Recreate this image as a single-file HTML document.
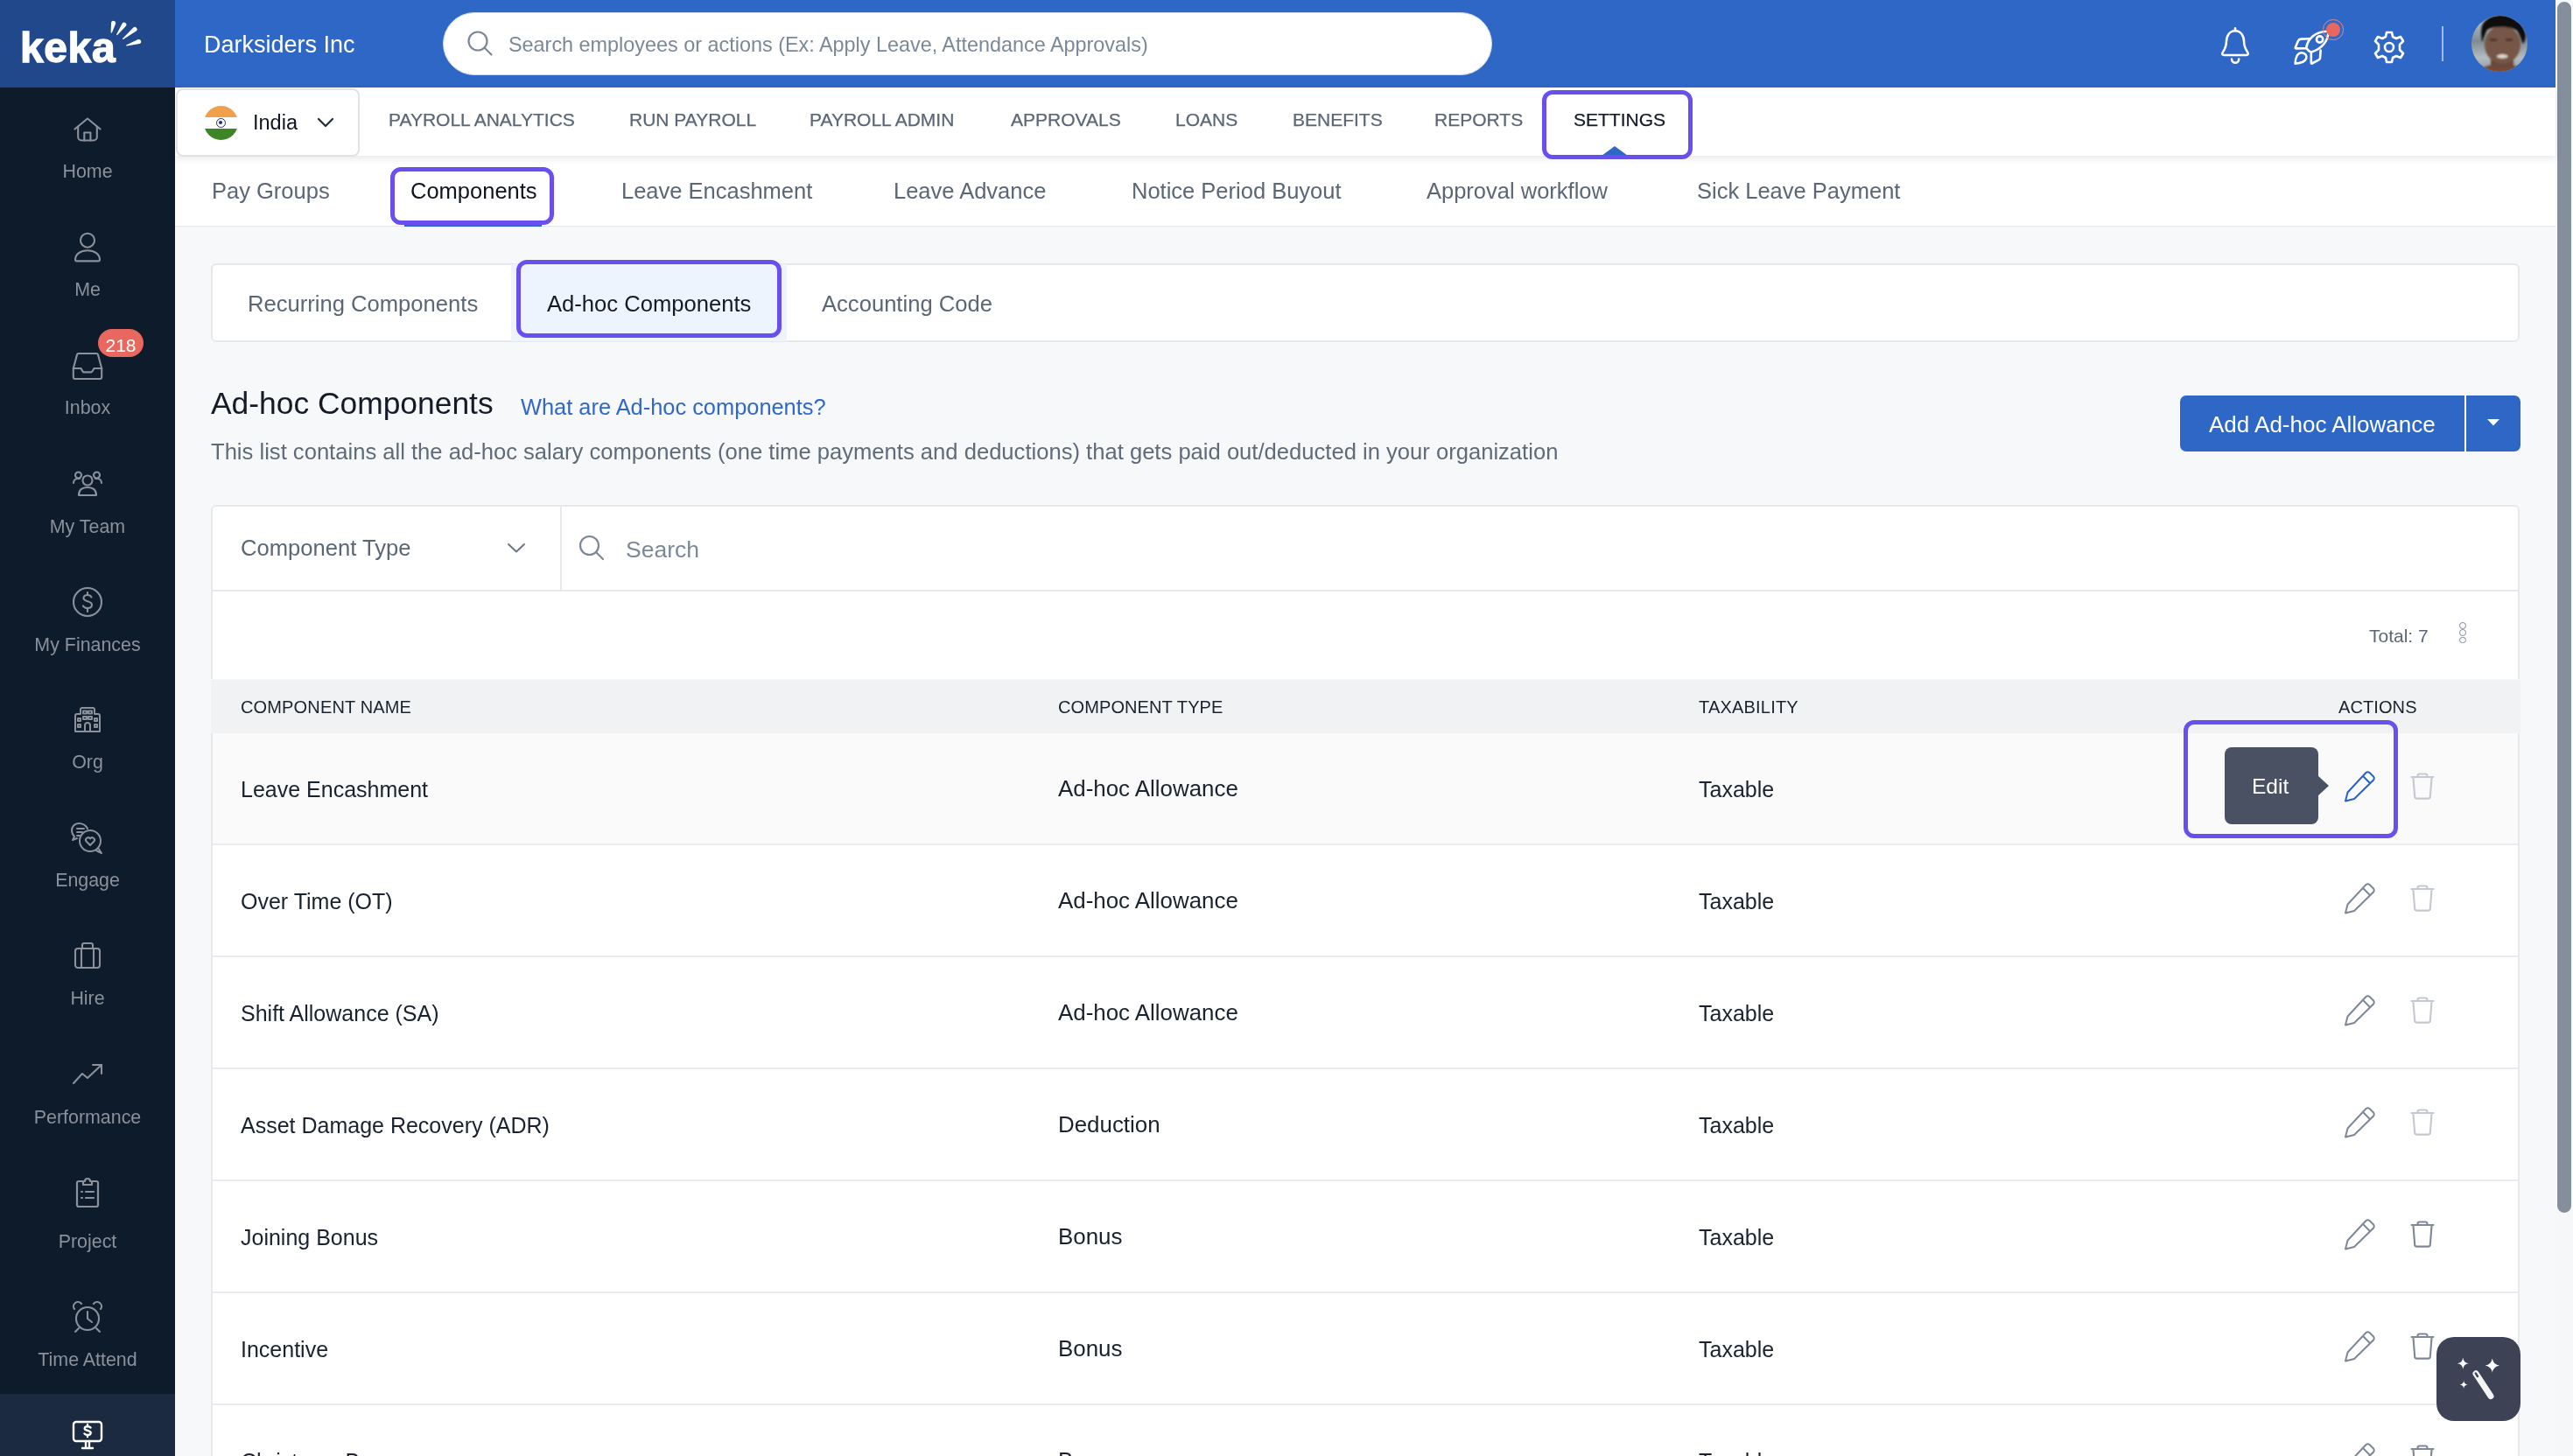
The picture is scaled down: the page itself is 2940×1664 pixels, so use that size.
<!DOCTYPE html><html><head><meta charset="utf-8"><style>
html,body{margin:0;padding:0;width:2940px;height:1664px;overflow:hidden;background:#f7f8fa;font-family:"Liberation Sans", sans-serif;}
.t{position:absolute;white-space:nowrap;line-height:1;will-change:transform;}
.b{position:absolute;box-sizing:border-box;}
</style></head><body>
<div class="b" style="left:0.0px;top:0.0px;width:200.0px;height:1664.0px;background:#0e1b2a"></div>
<div class="b" style="left:0.0px;top:0.0px;width:200.0px;height:100.0px;background:#21488a"></div>
<div class="b" style="left:200.0px;top:0.0px;width:2720.0px;height:100.0px;background:#2f67c7"></div>
<div class="b" style="left:200.0px;top:100.0px;width:2720.0px;height:78.0px;background:#fff;box-shadow:0 3px 8px rgba(20,30,50,0.10);z-index:2"></div>
<div class="b" style="left:200.0px;top:178.0px;width:2720.0px;height:81.5px;background:#fff;border-bottom:2px solid #e6e8ec"></div>
<div class="b" style="left:200.0px;top:259.0px;width:2720.0px;height:1405.0px;background:#f7f8fa"></div>
<div class="t" style="left:23px;top:31.2px;font-size:48px;color:#fff;font-weight:bold;letter-spacing:0.6px;-webkit-text-stroke:1.3px #fff;">keka</div>
<svg class="b" style="left:100px;top:0px" width="70" height="60" viewBox="0 0 70 60"><path d="M27.98 37.15 L32.14 26.95 A2.6 2.6 0 0 0 27.06 25.85 L26.62 36.85 A0.7 0.7 0 0 0 27.98 37.15 Z" fill="#fff"/><path d="M34.37 39.81 L43.91 29.82 A2.6 2.6 0 0 0 39.69 26.78 L33.23 38.99 A0.7 0.7 0 0 0 34.37 39.81 Z" fill="#fff"/><path d="M41.24 44.84 L55.64 35.62 A2.6 2.6 0 0 0 52.36 31.58 L40.36 43.76 A0.7 0.7 0 0 0 41.24 44.84 Z" fill="#fff"/><path d="M45.11 52.47 L59.36 50.09 A2.6 2.6 0 0 0 57.84 45.11 L44.69 51.13 A0.7 0.7 0 0 0 45.11 52.47 Z" fill="#fff"/></svg>
<div class="t " style="left:233.0px;top:38.1px;font-size:27px;color:#ffffff;font-weight:normal;">Darksiders Inc</div>
<div class="b" style="left:506.0px;top:14.0px;width:1199.0px;height:72.0px;background:#fff;border:1.5px solid #d3d9e3;border-radius:36px"></div>
<svg class="b" style="left:533.0px;top:34.0px;" width="32.0" height="32.0" viewBox="0 0 32 32" fill="none"><circle cx="13" cy="13" r="10.5" stroke="#7b8797" stroke-width="2.2"/><line x1="20.5" y1="20.5" x2="28.5" y2="28.5" stroke="#7b8797" stroke-width="2.2" stroke-linecap="round"/></svg>
<div class="t " style="left:581.0px;top:40.3px;font-size:23.4px;color:#7b8898;font-weight:normal;">Search employees or actions (Ex: Apply Leave, Attendance Approvals)</div>
<svg class="b" style="left:2525.0px;top:20.0px;" width="60.0" height="60.0" viewBox="0 0 60 60" fill="none"><g stroke="#fff" stroke-width="2.5" stroke-linecap="round" stroke-linejoin="round"><path d="M29 12.2 V15"/><path d="M29 15.2 C22.5 15.2 18.9 21 18.9 28 C18.9 33 17.6 35.5 15 39.4 C13.6 41.6 14.2 43 16.4 43 H41.6 C43.8 43 44.4 41.6 43 39.4 C40.4 35.5 39.1 33 39.1 28 C39.1 21 35.5 15.2 29 15.2 Z"/><path d="M25 47.6 A4.1 4.1 0 0 0 33.2 47.6"/></g></svg>
<svg class="b" style="left:2610.0px;top:15.0px;" width="80.0" height="70.0" viewBox="0 0 80 70" fill="none"><g stroke="#fff" stroke-width="2.6" stroke-linejoin="round" stroke-linecap="round"><path d="M25.2 40 C26.5 30 35 20.5 50.5 20.7 C50.5 31 44 40.5 30.8 44.6 C28.5 43.5 26.5 42 25.2 40 Z"/><circle cx="40.6" cy="30" r="3.6"/><path d="M28.6 29.2 L19 29.6 Q17 29.8 16 31.6 L12.8 39.2 Q12.6 40.4 13.8 40.4 L25.2 40.2"/><path d="M41.6 42.6 L41 51.4 Q40.8 52.8 39.6 53.4 L31.8 57.5 Q30.8 57.9 30.8 56.8 L30.8 44.6"/><path d="M12.6 57.6 C12.8 50 15.6 45.2 20 45.2 C23.6 45.2 26.4 48.4 25.2 51.8 C23.6 56 18.4 57.4 12.6 57.6 Z"/></g></svg>
<div class="b" style="left:2654.2px;top:22px;width:23.6px;height:23.6px;border-radius:50%;border:1.3px solid rgba(236,140,130,0.95);"></div>
<div class="b" style="left:2658.1px;top:25.9px;width:15.8px;height:15.8px;border-radius:50%;background:#e8675e;"></div>
<svg class="b" style="left:2711.0px;top:34.0px;" width="38.0" height="40.0" viewBox="0 0 38 40" fill="none"><path d="M16 3 h6 l1 5 l4 2 l5-2 l3 5 l-4 4 v6 l4 4 l-3 5 l-5-2 l-4 2 l-1 5 h-6 l-1-5 l-4-2 l-5 2 l-3-5 l4-4 v-6 l-4-4 l3-5 l5 2 l4-2 z" stroke="#fff" stroke-width="2.6" stroke-linejoin="round"/><circle cx="19" cy="20" r="5" stroke="#fff" stroke-width="2.6"/></svg>
<div class="b" style="left:2790.0px;top:30.0px;width:2.0px;height:40.0px;background:rgba(255,255,255,0.55)"></div>
<svg class="b" style="left:2824px;top:18px" width="64" height="64" viewBox="0 0 64 64">
<defs><clipPath id="avc"><circle cx="32" cy="32" r="32"/></clipPath><filter id="avb" x="-20%" y="-20%" width="140%" height="140%"><feGaussianBlur stdDeviation="0.9"/></filter>
<linearGradient id="avg" x1="0" y1="0" x2="0" y2="1"><stop offset="0" stop-color="#c3cacf"/><stop offset="0.45" stop-color="#7f8b93"/><stop offset="0.75" stop-color="#b4bcc2"/><stop offset="1" stop-color="#8f999f"/></linearGradient></defs>
<g clip-path="url(#avc)"><rect width="64" height="64" fill="url(#avg)"/><g filter="url(#avb)">
<ellipse cx="34" cy="67" rx="27" ry="12" fill="#7a4a33"/>
<rect x="22" y="46" width="26" height="14" fill="#6b4a3b"/>
<ellipse cx="35.5" cy="33" rx="20.5" ry="22" fill="#765646"/>
<path d="M13 9 C19 1 27 -1 36 -1 C50 -1 60 8 62 22 C62 27 60 31 58.5 32 C56.5 26 54.5 20.5 52 17 C46 12 26 11 18 16 C16 20 14.2 24.5 12.5 30 C10.5 24 10.5 14 13 9 Z" fill="#0f0f10"/>
<path d="M21 27.5 h8 M39 27.5 h8" stroke="#36261f" stroke-width="2.2"/>
<ellipse cx="35.2" cy="46.4" rx="6.2" ry="2.3" fill="#e0d4cc"/>
</g></g></svg>
<svg class="b" style="left:84.0px;top:133.0px;" width="32.0" height="30.0" viewBox="0 0 32 30" fill="none"><g stroke="#8a919b" stroke-width="2.1" stroke-linecap="round" stroke-linejoin="round"><path d="M1.5 14.5 L16 2.5 L30.5 14.5"/><path d="M5.2 11.6 V23.5 a4 4 0 0 0 4 4 H22.8 a4 4 0 0 0 4-4 V11.6"/><path d="M12.3 27.5 V18.5 H19.4 V27.5"/></g></svg>
<div class="t" style="left:0;width:200px;text-align:center;top:186.4px;font-size:21.4px;color:#8a919b;">Home</div>
<svg class="b" style="left:84.0px;top:265.0px;" width="32.0" height="36.0" viewBox="0 0 32 36" fill="none"><g stroke="#8a919b" stroke-width="2.1" stroke-linecap="round" stroke-linejoin="round"><circle cx="16" cy="9.7" r="8"/><path d="M2 31.8 c0-6.5 6-10.6 14-10.6 s14 4.1 14 10.6 a1.6 1.6 0 0 1 -1.6 1.6 H3.6 A1.6 1.6 0 0 1 2 31.8 z"/></g></svg>
<div class="t" style="left:0;width:200px;text-align:center;top:320.8px;font-size:21.4px;color:#8a919b;">Me</div>
<svg class="b" style="left:82.0px;top:402.0px;" width="36.0" height="33.0" viewBox="0 0 36 33" fill="none"><g stroke="#8a919b" stroke-width="2.1" stroke-linecap="round" stroke-linejoin="round"><path d="M7.5 2 a1.5 1.5 0 0 0 -1.4 1.1 L1.8 19 V29 a2 2 0 0 0 2 2 H32.2 a2 2 0 0 0 2-2 V19 L29.9 3.1 A1.5 1.5 0 0 0 28.5 2 Z"/><path d="M1.8 19 H10.5 L12.6 22.6 a1.6 1.6 0 0 0 1.4 0.8 H22 a1.6 1.6 0 0 0 1.4-0.8 L25.5 19 H34.2"/></g></svg>
<div class="b" style="left:112px;top:376px;width:52px;height:32px;border-radius:16px;background:#e8675e;"></div>
<div class="t" style="left:112px;width:52px;text-align:center;top:383.7px;font-size:21px;color:#fff;">218</div>
<div class="t" style="left:0;width:200px;text-align:center;top:456.1px;font-size:21.4px;color:#8a919b;">Inbox</div>
<svg class="b" style="left:82.0px;top:538.0px;" width="36.0" height="30.0" viewBox="0 0 36 30" fill="none"><g stroke="#8a919b" stroke-width="2.1" stroke-linecap="round" stroke-linejoin="round"><circle cx="18" cy="11" r="5.5"/><path d="M8 28 c0-6 4-9 10-9 s10 3 10 9 z"/><circle cx="7.5" cy="5" r="3.5"/><circle cx="28.5" cy="5" r="3.5"/><path d="M2 14 c0-3 2-5 5-5 h2"/><path d="M34 14 c0-3-2-5-5-5 h-2"/></g></svg>
<div class="t" style="left:0;width:200px;text-align:center;top:591.5px;font-size:21.4px;color:#8a919b;">My Team</div>
<svg class="b" style="left:82.0px;top:670.0px;" width="36.0" height="36.0" viewBox="0 0 36 36" fill="none"><g stroke="#8a919b" stroke-width="2.1" stroke-linecap="round" stroke-linejoin="round"><circle cx="18" cy="18" r="16"/><path d="M22.5 12.5 c-1-2-3-2.5-4.5-2.5 c-2.5 0-4.5 1.3-4.5 3.6 c0 4.9 9.5 2.4 9.5 7.6 c0 2.2-2 3.8-5 3.8 c-2 0-4-0.8-5-2.6"/><path d="M18 7 V10 M18 25 V29"/></g></svg>
<div class="t" style="left:0;width:200px;text-align:center;top:726.5px;font-size:21.4px;color:#8a919b;">My Finances</div>
<svg class="b" style="left:84.0px;top:808.0px;" width="32.0" height="30.0" viewBox="0 0 32 30" fill="none"><g stroke="#8a919b" stroke-width="2" stroke-linecap="round" stroke-linejoin="round"><path d="M2 28 V10 a2 2 0 0 1 2-2 H8 V3 a2 2 0 0 1 2-2 H22 a2 2 0 0 1 2 2 V8 H28 a2 2 0 0 1 2 2 V28 Z"/><path d="M13 28 V21 a3 3 0 0 1 6 0 V28"/><rect x="11" y="4.5" width="4" height="3"/><rect x="17" y="4.5" width="4" height="3"/><rect x="11" y="11" width="4" height="3"/><rect x="17" y="11" width="4" height="3"/><rect x="5" y="13" width="3" height="3"/><rect x="24" y="13" width="3" height="3"/><rect x="5" y="20" width="3" height="3"/><rect x="24" y="20" width="3" height="3"/></g></svg>
<div class="t" style="left:0;width:200px;text-align:center;top:860.9px;font-size:21.4px;color:#8a919b;">Org</div>
<svg class="b" style="left:81.0px;top:939.0px;" width="38.0" height="38.0" viewBox="0 0 38 38" fill="none"><g stroke="#8a919b" stroke-width="2" stroke-linecap="round" stroke-linejoin="round"><path d="M19 8 c-2-4-6-6-10-6 c-5 0-8 4-8 8 c0 3 1 5 3 7 l-2 4 l5-2"/><path d="M7 8 h8 M7 12 h6 M7 16 h3"/><circle cx="22" cy="22" r="12"/><path d="M31 30 l4 6 l-6-3"/><path d="M22 27 l-4.5-4.5 a2.6 2.6 0 0 1 4.5-3 a2.6 2.6 0 0 1 4.5 3 z"/></g></svg>
<div class="t" style="left:0;width:200px;text-align:center;top:996.0px;font-size:21.4px;color:#8a919b;">Engage</div>
<svg class="b" style="left:84.0px;top:1077.0px;" width="32.0" height="31.0" viewBox="0 0 32 31" fill="none"><g stroke="#8a919b" stroke-width="2.1" stroke-linecap="round" stroke-linejoin="round"><rect x="2" y="7" width="28" height="22" rx="3"/><path d="M10 7 V3 a2 2 0 0 1 2-2 H20 a2 2 0 0 1 2 2 V7"/><path d="M9 7 V29 M23 7 V29"/></g></svg>
<div class="t" style="left:0;width:200px;text-align:center;top:1130.5px;font-size:21.4px;color:#8a919b;">Hire</div>
<svg class="b" style="left:82.0px;top:1215.0px;" width="36.0" height="25.0" viewBox="0 0 36 25" fill="none"><g stroke="#8a919b" stroke-width="2.1" stroke-linecap="round" stroke-linejoin="round"><path d="M2 23 L12 12 L18 17 L34 2"/><path d="M24 2 H34 V12"/></g></svg>
<div class="t" style="left:0;width:200px;text-align:center;top:1266.7px;font-size:21.4px;color:#8a919b;">Performance</div>
<svg class="b" style="left:86.0px;top:1345.0px;" width="28.0" height="36.0" viewBox="0 0 28 36" fill="none"><g stroke="#8a919b" stroke-width="2.2" stroke-linecap="round" stroke-linejoin="round"><path d="M8 5 H4 a2 2 0 0 0 -2 2 V32 a2 2 0 0 0 2 2 H24 a2 2 0 0 0 2-2 V7 a2 2 0 0 0 -2-2 H20"/><path d="M9 9 V5 H11 a3 3 0 0 1 6 0 H19 V9 Z"/><path d="M7 17 h1 M12 17 h9 M7 24 h1 M12 24 h9"/></g></svg>
<div class="t" style="left:0;width:200px;text-align:center;top:1409.2px;font-size:21.4px;color:#8a919b;">Project</div>
<svg class="b" style="left:82.0px;top:1487.0px;" width="36.0" height="37.0" viewBox="0 0 36 37" fill="none"><g stroke="#8a919b" stroke-width="2.1" stroke-linecap="round" stroke-linejoin="round"><circle cx="18" cy="20" r="13"/><path d="M18 12 V20 L23 24"/><path d="M3 9 a5 5 0 0 1 8-6"/><path d="M33 9 a5 5 0 0 0 -8-6"/><path d="M8 31 L4 35 M28 31 L32 35"/></g></svg>
<div class="t" style="left:0;width:200px;text-align:center;top:1543.7px;font-size:21.4px;color:#8a919b;">Time Attend</div>
<div class="b" style="left:0.0px;top:1593.0px;width:200.0px;height:71.0px;background:#1b2a40"></div>
<svg class="b" style="left:82.0px;top:1623.0px;" width="36.0" height="35.0" viewBox="0 0 36 35" fill="none"><g stroke="#fff" stroke-width="2.4" stroke-linecap="round" stroke-linejoin="round"><rect x="2" y="2" width="32" height="22" rx="3"/><path d="M12 32 H24 M16 24 V32 M20 24 V32"/><path d="M21.5 8.5 c-0.8-1-2-1.3-3.5-1.3 c-2 0-3.3 0.9-3.3 2.3 c0 3.2 7 1.6 7 5 c0 1.5-1.4 2.5-3.7 2.5 c-1.5 0-2.8-0.5-3.6-1.6 M18 5 V7 M18 17 V19"/></g></svg>
<div class="b" style="left:201.0px;top:101.0px;width:210.0px;height:78.0px;background:#fff;border:2px solid #dfe2e7;border-radius:8px;z-index:3"></div>
<div class="b" style="left:232.5px;top:120.5px;width:39px;height:39px;border-radius:50%;overflow:hidden;z-index:4;background:#fff;">
<div class="b" style="left:0;top:0;width:39px;height:13px;background:#f0a04b;"></div>
<div class="b" style="left:0;top:26px;width:39px;height:13px;background:#3e8526;"></div>
<div class="b" style="left:14px;top:14px;width:11px;height:11px;border-radius:50%;border:1.5px solid #1f2a8a;"></div>
<div class="b" style="left:17.5px;top:17.5px;width:4px;height:4px;border-radius:50%;background:#1f2a8a;"></div>
</div>
<div class="t" style="left:289px;top:128.7px;font-size:23.5px;color:#0f1420;z-index:4;">India</div>
<svg class="b" style="left:362.0px;top:134.0px;z-index:4" width="20.0" height="12.0" viewBox="0 0 20 12" fill="none"><path d="M2 2 L10 10 L18 2" stroke="#222a36" stroke-width="2.2" stroke-linecap="round" stroke-linejoin="round"/></svg>
<div class="t " style="left:444.0px;top:126.4px;font-size:21px;color:#5b6676;font-weight:normal;z-index:3;-webkit-text-stroke:0.25px #5b6676">PAYROLL ANALYTICS</div>
<div class="t " style="left:718.8px;top:126.4px;font-size:21px;color:#5b6676;font-weight:normal;z-index:3;-webkit-text-stroke:0.25px #5b6676">RUN PAYROLL</div>
<div class="t " style="left:925.0px;top:126.4px;font-size:21px;color:#5b6676;font-weight:normal;z-index:3;-webkit-text-stroke:0.25px #5b6676">PAYROLL ADMIN</div>
<div class="t " style="left:1155.0px;top:126.4px;font-size:21px;color:#5b6676;font-weight:normal;z-index:3;-webkit-text-stroke:0.25px #5b6676">APPROVALS</div>
<div class="t " style="left:1342.6px;top:126.4px;font-size:21px;color:#5b6676;font-weight:normal;z-index:3;-webkit-text-stroke:0.25px #5b6676">LOANS</div>
<div class="t " style="left:1476.7px;top:126.4px;font-size:21px;color:#5b6676;font-weight:normal;z-index:3;-webkit-text-stroke:0.25px #5b6676">BENEFITS</div>
<div class="t " style="left:1638.8px;top:126.4px;font-size:21px;color:#5b6676;font-weight:normal;z-index:3;-webkit-text-stroke:0.25px #5b6676">REPORTS</div>
<div class="t " style="left:1797.5px;top:126.4px;font-size:21px;color:#141a26;font-weight:normal;z-index:3;-webkit-text-stroke:0.25px #141a26">SETTINGS</div>
<svg class="b" style="left:1830.0px;top:167.0px;z-index:3" width="30.0" height="11.0" viewBox="0 0 30 11" fill="none"><path d="M0 11 L15 0 L30 11 Z" fill="#2f67c7"/></svg>
<div class="b" style="left:1762px;top:103px;width:172px;height:79px;border:5.5px solid #6a4ff0;border-radius:12px;z-index:5"></div>
<div class="t " style="left:241.7px;top:206.0px;font-size:25.5px;color:#5b6676;font-weight:normal;">Pay Groups</div>
<div class="t " style="left:710.0px;top:206.0px;font-size:25.5px;color:#5b6676;font-weight:normal;">Leave Encashment</div>
<div class="t " style="left:1020.6px;top:206.0px;font-size:25.5px;color:#5b6676;font-weight:normal;">Leave Advance</div>
<div class="t " style="left:1292.8px;top:206.0px;font-size:25.5px;color:#5b6676;font-weight:normal;">Notice Period Buyout</div>
<div class="t " style="left:1630.4px;top:206.0px;font-size:25.5px;color:#5b6676;font-weight:normal;">Approval workflow</div>
<div class="t " style="left:1938.6px;top:206.0px;font-size:25.5px;color:#5b6676;font-weight:normal;">Sick Leave Payment</div>
<div class="t " style="left:468.5px;top:205.7px;font-size:25.5px;color:#0f1420;font-weight:normal;">Components</div>
<div class="b" style="left:462.0px;top:255.0px;width:157.0px;height:4.0px;background:#2f67c7"></div>
<div class="b" style="left:446px;top:190.5px;width:187px;height:66.5px;border:5.5px solid #6a4ff0;border-radius:12px;z-index:5"></div>
<div class="b" style="left:241.0px;top:300.5px;width:2638.0px;height:90.5px;background:#fff;border:2px solid #e6e8eb;border-radius:6px"></div>
<div class="b" style="left:584.0px;top:302.0px;width:315.0px;height:87.5px;background:#eef4fd"></div>
<div class="t " style="left:283.0px;top:334.7px;font-size:25.6px;color:#5b6676;font-weight:normal;">Recurring Components</div>
<div class="t " style="left:624.8px;top:335.1px;font-size:25.6px;color:#141a26;font-weight:normal;">Ad-hoc Components</div>
<div class="t " style="left:939.0px;top:335.1px;font-size:25.6px;color:#5b6676;font-weight:normal;">Accounting Code</div>
<div class="b" style="left:590px;top:297px;width:303px;height:88.5px;border:5.5px solid #6a4ff0;border-radius:12px;z-index:5"></div>
<div class="t " style="left:240.7px;top:444.2px;font-size:35.4px;color:#141a26;font-weight:normal;">Ad-hoc Components</div>
<div class="t " style="left:595.3px;top:452.7px;font-size:25.4px;color:#2f68c6;font-weight:normal;">What are Ad-hoc components?</div>
<div class="t " style="left:240.7px;top:504.3px;font-size:25.6px;color:#606b7a;font-weight:normal;">This list contains all the ad-hoc salary components (one time payments and deductions) that gets paid out/deducted in your organization</div>
<div class="b" style="left:2491.0px;top:452.0px;width:389.0px;height:64.0px;background:#2f67c7;border-radius:7px"></div>
<div class="b" style="left:2815.5px;top:452.0px;width:2.5px;height:64.0px;background:#fff"></div>
<div class="t " style="left:2524.0px;top:472.3px;font-size:26px;color:#ffffff;font-weight:normal;">Add Ad-hoc Allowance</div>
<svg class="b" style="left:2842.0px;top:479.0px;" width="14.0" height="8.0" viewBox="0 0 14 8" fill="none"><path d="M0 0 H14 L7 7.5 Z" fill="#fff"/></svg>
<div class="b" style="left:241.0px;top:577.0px;width:2638.0px;height:199.0px;background:#fff;border:2px solid #e6e8eb;border-bottom:none;border-radius:6px 6px 0 0"></div>
<div class="b" style="left:640.0px;top:577.0px;width:2.0px;height:98.0px;background:#e6e8eb"></div>
<div class="b" style="left:241.0px;top:674.0px;width:2638.0px;height:2.0px;background:#e6e8eb"></div>
<div class="t " style="left:275.0px;top:614.4px;font-size:25.6px;color:#5b6676;font-weight:normal;">Component Type</div>
<svg class="b" style="left:578.0px;top:619.0px;" width="24.0" height="14.0" viewBox="0 0 24 14" fill="none"><path d="M3 3 L12 11.5 L21 3" stroke="#6b7686" stroke-width="2" stroke-linecap="round" stroke-linejoin="round"/></svg>
<svg class="b" style="left:660.0px;top:610.0px;" width="32.0" height="32.0" viewBox="0 0 32 32" fill="none"><circle cx="13.5" cy="13.5" r="10.5" stroke="#7b8797" stroke-width="2.2"/><line x1="21" y1="21" x2="29" y2="29" stroke="#7b8797" stroke-width="2.2" stroke-linecap="round"/></svg>
<div class="t " style="left:715.2px;top:614.8px;font-size:26.5px;color:#7b8898;font-weight:normal;">Search</div>
<div class="t " style="left:2707.0px;top:716.2px;font-size:21px;color:#5b6676;font-weight:normal;">Total: 7</div>
<div class="b" style="left:2809.8px;top:710.9px;width:7.8px;height:7.8px;border-radius:50%;border:1.8px solid #7d8797;"></div>
<div class="b" style="left:2809.8px;top:719.3px;width:7.8px;height:7.8px;border-radius:50%;border:1.8px solid #7d8797;"></div>
<div class="b" style="left:2809.8px;top:727.7px;width:7.8px;height:7.8px;border-radius:50%;border:1.8px solid #7d8797;"></div>
<div class="b" style="left:241.0px;top:776.5px;width:2639.0px;height:61.5px;background:#f1f2f4"></div>
<div class="t " style="left:275.0px;top:797.8px;font-size:20px;color:#1a2230;font-weight:normal;letter-spacing:0.15px;">COMPONENT NAME</div>
<div class="t " style="left:1208.6px;top:797.8px;font-size:20px;color:#1a2230;font-weight:normal;letter-spacing:0.1px;">COMPONENT TYPE</div>
<div class="t " style="left:1940.5px;top:797.8px;font-size:20px;color:#1a2230;font-weight:normal;letter-spacing:0.2px;">TAXABILITY</div>
<div class="t " style="left:2672.0px;top:797.8px;font-size:20px;color:#1a2230;font-weight:normal;letter-spacing:0.1px;">ACTIONS</div>
<div class="b" style="left:241.0px;top:838.0px;width:2638.0px;height:128.0px;background:#fafafa;border-left:2px solid #e6e8eb;border-right:2px solid #e6e8eb;border-bottom:2px solid #e9ebee"></div>
<div class="t " style="left:275.0px;top:889.8px;font-size:25px;color:#1a2230;font-weight:normal;">Leave Encashment</div>
<div class="t " style="left:1208.6px;top:889.1px;font-size:25.9px;color:#1a2230;font-weight:normal;">Ad-hoc Allowance</div>
<div class="t " style="left:1940.5px;top:889.8px;font-size:25px;color:#1a2230;font-weight:normal;">Taxable</div>
<svg class="b" style="left:2678.0px;top:881.0px;" width="36.0" height="36.0" viewBox="0 0 36 36" fill="none"><path d="M2 34.5 L4.5 24.5 L25.5 2 Q27.5 0.5 29.5 2 L34 6.5 Q35.5 8.5 34 10.5 L12 32 Z M22 6 L30 14" stroke="#2563c9" stroke-width="2.0" stroke-linejoin="round"/></svg>
<svg class="b" style="left:2754.0px;top:883.0px;" width="28.0" height="31.0" viewBox="0 0 28 31" fill="none"><path d="M1.5 5 H26.5 M8.5 5 V3.8 a2.3 2.3 0 0 1 2.3-2.3 H17.2 a2.3 2.3 0 0 1 2.3 2.3 V5 M3.4 5 L5.2 27.6 a2 2 0 0 0 2 2 H20.8 a2 2 0 0 0 2-2 L24.6 5" stroke="#c4c9d1" stroke-width="2.1" stroke-linecap="round" stroke-linejoin="round"/></svg>
<div class="b" style="left:241.0px;top:966.0px;width:2638.0px;height:128.0px;background:#fff;border-left:2px solid #e6e8eb;border-right:2px solid #e6e8eb;border-bottom:2px solid #e9ebee"></div>
<div class="t " style="left:275.0px;top:1017.8px;font-size:25px;color:#1a2230;font-weight:normal;">Over Time (OT)</div>
<div class="t " style="left:1208.6px;top:1017.1px;font-size:25.9px;color:#1a2230;font-weight:normal;">Ad-hoc Allowance</div>
<div class="t " style="left:1940.5px;top:1017.8px;font-size:25px;color:#1a2230;font-weight:normal;">Taxable</div>
<svg class="b" style="left:2678.0px;top:1009.0px;" width="36.0" height="36.0" viewBox="0 0 36 36" fill="none"><path d="M2 34.5 L4.5 24.5 L25.5 2 Q27.5 0.5 29.5 2 L34 6.5 Q35.5 8.5 34 10.5 L12 32 Z M22 6 L30 14" stroke="#7d8797" stroke-width="2.0" stroke-linejoin="round"/></svg>
<svg class="b" style="left:2754.0px;top:1011.0px;" width="28.0" height="31.0" viewBox="0 0 28 31" fill="none"><path d="M1.5 5 H26.5 M8.5 5 V3.8 a2.3 2.3 0 0 1 2.3-2.3 H17.2 a2.3 2.3 0 0 1 2.3 2.3 V5 M3.4 5 L5.2 27.6 a2 2 0 0 0 2 2 H20.8 a2 2 0 0 0 2-2 L24.6 5" stroke="#c4c9d1" stroke-width="2.1" stroke-linecap="round" stroke-linejoin="round"/></svg>
<div class="b" style="left:241.0px;top:1094.0px;width:2638.0px;height:128.0px;background:#fff;border-left:2px solid #e6e8eb;border-right:2px solid #e6e8eb;border-bottom:2px solid #e9ebee"></div>
<div class="t " style="left:275.0px;top:1145.8px;font-size:25px;color:#1a2230;font-weight:normal;">Shift Allowance (SA)</div>
<div class="t " style="left:1208.6px;top:1145.1px;font-size:25.9px;color:#1a2230;font-weight:normal;">Ad-hoc Allowance</div>
<div class="t " style="left:1940.5px;top:1145.8px;font-size:25px;color:#1a2230;font-weight:normal;">Taxable</div>
<svg class="b" style="left:2678.0px;top:1137.0px;" width="36.0" height="36.0" viewBox="0 0 36 36" fill="none"><path d="M2 34.5 L4.5 24.5 L25.5 2 Q27.5 0.5 29.5 2 L34 6.5 Q35.5 8.5 34 10.5 L12 32 Z M22 6 L30 14" stroke="#7d8797" stroke-width="2.0" stroke-linejoin="round"/></svg>
<svg class="b" style="left:2754.0px;top:1139.0px;" width="28.0" height="31.0" viewBox="0 0 28 31" fill="none"><path d="M1.5 5 H26.5 M8.5 5 V3.8 a2.3 2.3 0 0 1 2.3-2.3 H17.2 a2.3 2.3 0 0 1 2.3 2.3 V5 M3.4 5 L5.2 27.6 a2 2 0 0 0 2 2 H20.8 a2 2 0 0 0 2-2 L24.6 5" stroke="#c4c9d1" stroke-width="2.1" stroke-linecap="round" stroke-linejoin="round"/></svg>
<div class="b" style="left:241.0px;top:1222.0px;width:2638.0px;height:128.0px;background:#fff;border-left:2px solid #e6e8eb;border-right:2px solid #e6e8eb;border-bottom:2px solid #e9ebee"></div>
<div class="t " style="left:275.0px;top:1273.8px;font-size:25px;color:#1a2230;font-weight:normal;">Asset Damage Recovery (ADR)</div>
<div class="t " style="left:1208.6px;top:1273.1px;font-size:25.9px;color:#1a2230;font-weight:normal;">Deduction</div>
<div class="t " style="left:1940.5px;top:1273.8px;font-size:25px;color:#1a2230;font-weight:normal;">Taxable</div>
<svg class="b" style="left:2678.0px;top:1265.0px;" width="36.0" height="36.0" viewBox="0 0 36 36" fill="none"><path d="M2 34.5 L4.5 24.5 L25.5 2 Q27.5 0.5 29.5 2 L34 6.5 Q35.5 8.5 34 10.5 L12 32 Z M22 6 L30 14" stroke="#7d8797" stroke-width="2.0" stroke-linejoin="round"/></svg>
<svg class="b" style="left:2754.0px;top:1267.0px;" width="28.0" height="31.0" viewBox="0 0 28 31" fill="none"><path d="M1.5 5 H26.5 M8.5 5 V3.8 a2.3 2.3 0 0 1 2.3-2.3 H17.2 a2.3 2.3 0 0 1 2.3 2.3 V5 M3.4 5 L5.2 27.6 a2 2 0 0 0 2 2 H20.8 a2 2 0 0 0 2-2 L24.6 5" stroke="#c4c9d1" stroke-width="2.1" stroke-linecap="round" stroke-linejoin="round"/></svg>
<div class="b" style="left:241.0px;top:1350.0px;width:2638.0px;height:128.0px;background:#fff;border-left:2px solid #e6e8eb;border-right:2px solid #e6e8eb;border-bottom:2px solid #e9ebee"></div>
<div class="t " style="left:275.0px;top:1401.8px;font-size:25px;color:#1a2230;font-weight:normal;">Joining Bonus</div>
<div class="t " style="left:1208.6px;top:1401.1px;font-size:25.9px;color:#1a2230;font-weight:normal;">Bonus</div>
<div class="t " style="left:1940.5px;top:1401.8px;font-size:25px;color:#1a2230;font-weight:normal;">Taxable</div>
<svg class="b" style="left:2678.0px;top:1393.0px;" width="36.0" height="36.0" viewBox="0 0 36 36" fill="none"><path d="M2 34.5 L4.5 24.5 L25.5 2 Q27.5 0.5 29.5 2 L34 6.5 Q35.5 8.5 34 10.5 L12 32 Z M22 6 L30 14" stroke="#7d8797" stroke-width="2.0" stroke-linejoin="round"/></svg>
<svg class="b" style="left:2754.0px;top:1395.0px;" width="28.0" height="31.0" viewBox="0 0 28 31" fill="none"><path d="M1.5 5 H26.5 M8.5 5 V3.8 a2.3 2.3 0 0 1 2.3-2.3 H17.2 a2.3 2.3 0 0 1 2.3 2.3 V5 M3.4 5 L5.2 27.6 a2 2 0 0 0 2 2 H20.8 a2 2 0 0 0 2-2 L24.6 5" stroke="#7d8797" stroke-width="2.1" stroke-linecap="round" stroke-linejoin="round"/></svg>
<div class="b" style="left:241.0px;top:1478.0px;width:2638.0px;height:128.0px;background:#fff;border-left:2px solid #e6e8eb;border-right:2px solid #e6e8eb;border-bottom:2px solid #e9ebee"></div>
<div class="t " style="left:275.0px;top:1529.8px;font-size:25px;color:#1a2230;font-weight:normal;">Incentive</div>
<div class="t " style="left:1208.6px;top:1529.1px;font-size:25.9px;color:#1a2230;font-weight:normal;">Bonus</div>
<div class="t " style="left:1940.5px;top:1529.8px;font-size:25px;color:#1a2230;font-weight:normal;">Taxable</div>
<svg class="b" style="left:2678.0px;top:1521.0px;" width="36.0" height="36.0" viewBox="0 0 36 36" fill="none"><path d="M2 34.5 L4.5 24.5 L25.5 2 Q27.5 0.5 29.5 2 L34 6.5 Q35.5 8.5 34 10.5 L12 32 Z M22 6 L30 14" stroke="#7d8797" stroke-width="2.0" stroke-linejoin="round"/></svg>
<svg class="b" style="left:2754.0px;top:1523.0px;" width="28.0" height="31.0" viewBox="0 0 28 31" fill="none"><path d="M1.5 5 H26.5 M8.5 5 V3.8 a2.3 2.3 0 0 1 2.3-2.3 H17.2 a2.3 2.3 0 0 1 2.3 2.3 V5 M3.4 5 L5.2 27.6 a2 2 0 0 0 2 2 H20.8 a2 2 0 0 0 2-2 L24.6 5" stroke="#7d8797" stroke-width="2.1" stroke-linecap="round" stroke-linejoin="round"/></svg>
<div class="b" style="left:241.0px;top:1606.0px;width:2638.0px;height:128.0px;background:#fff;border-left:2px solid #e6e8eb;border-right:2px solid #e6e8eb;border-bottom:2px solid #e9ebee"></div>
<div class="t " style="left:275.0px;top:1657.8px;font-size:25px;color:#1a2230;font-weight:normal;">Christmas Bonus</div>
<div class="t " style="left:1208.6px;top:1657.1px;font-size:25.9px;color:#1a2230;font-weight:normal;">Bonus</div>
<div class="t " style="left:1940.5px;top:1657.8px;font-size:25px;color:#1a2230;font-weight:normal;">Taxable</div>
<svg class="b" style="left:2678.0px;top:1649.0px;" width="36.0" height="36.0" viewBox="0 0 36 36" fill="none"><path d="M2 34.5 L4.5 24.5 L25.5 2 Q27.5 0.5 29.5 2 L34 6.5 Q35.5 8.5 34 10.5 L12 32 Z M22 6 L30 14" stroke="#7d8797" stroke-width="2.0" stroke-linejoin="round"/></svg>
<svg class="b" style="left:2754.0px;top:1651.0px;" width="28.0" height="31.0" viewBox="0 0 28 31" fill="none"><path d="M1.5 5 H26.5 M8.5 5 V3.8 a2.3 2.3 0 0 1 2.3-2.3 H17.2 a2.3 2.3 0 0 1 2.3 2.3 V5 M3.4 5 L5.2 27.6 a2 2 0 0 0 2 2 H20.8 a2 2 0 0 0 2-2 L24.6 5" stroke="#7d8797" stroke-width="2.1" stroke-linecap="round" stroke-linejoin="round"/></svg>
<div class="b" style="left:2542.0px;top:854.0px;width:107.0px;height:88.0px;background:#4a5162;border-radius:8px"></div>
<svg class="b" style="left:2648.0px;top:886.0px;" width="14.0" height="24.0" viewBox="0 0 14 24" fill="none"><path d="M0 0 L13 12 L0 24 Z" fill="#4a5162"/></svg>
<div class="t " style="left:2573.0px;top:886.8px;font-size:24.5px;color:#ffffff;font-weight:normal;">Edit</div>
<div class="b" style="left:2495px;top:823px;width:245px;height:135px;border:5.5px solid #6a4ff0;border-radius:12px;z-index:5"></div>
<div class="b" style="left:2784px;top:1528px;width:96px;height:96px;border-radius:20px;background:#3d4354;z-index:6;">
<svg class="b" style="left:0;top:0" width="96" height="96" viewBox="0 0 96 96"><g fill="#fff">
<path d="M30.3 23.6 Q30.85 29.65 36.9 30.2 Q30.85 30.75 30.3 36.8 Q29.75 30.75 23.700000000000003 30.2 Q29.75 29.65 30.3 23.6 Z"/><path d="M63.8 24.400000000000002 Q65.0 31.400000000000002 72.0 32.6 Q65.0 33.800000000000004 63.8 40.8 Q62.599999999999994 33.800000000000004 55.599999999999994 32.6 Q62.599999999999994 31.400000000000002 63.8 24.400000000000002 Z"/><path d="M31.2 50.0 Q31.599999999999998 54.0 35.6 54.4 Q31.599999999999998 54.8 31.2 58.8 Q30.8 54.8 26.799999999999997 54.4 Q30.8 54.0 31.2 50.0 Z"/>
</g><line x1="45" y1="41.8" x2="62" y2="67.6" stroke="#f4f5f7" stroke-width="7" stroke-linecap="round"/><line x1="44.8" y1="41.6" x2="47" y2="45" stroke="#3d4354" stroke-width="2.4" stroke-linecap="round"/></svg></div>
<div class="b" style="left:2920.0px;top:0.0px;width:20.0px;height:1664.0px;background:#f6f7f9"></div>
<div class="b" style="left:2921.0px;top:0.5px;width:18.0px;height:1386.5px;background:#858e9b;border:1.5px solid #fff;border-radius:9px"></div>
</body></html>
